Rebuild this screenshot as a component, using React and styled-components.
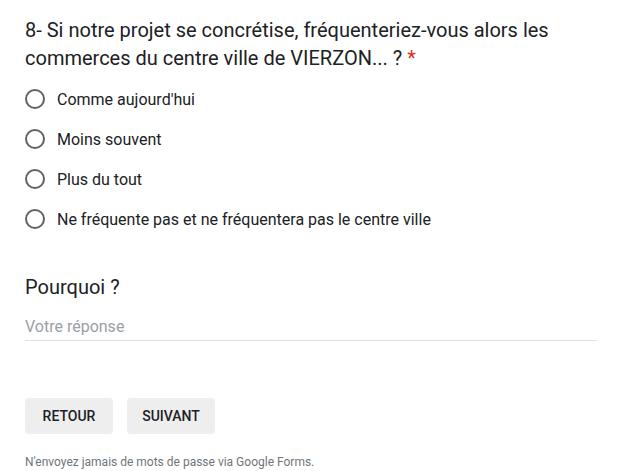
import React from "react";
import styled, { createGlobalStyle } from "styled-components";

const Global = createGlobalStyle`
  html, body { margin: 0; padding: 0; background: #fff; }
  body { font-family: Roboto, Arial, sans-serif; color: #202124; }
`;

const Page = styled.div`
  width: 572px;
  padding: 16px 0 0 25px;
  display: flex;
  flex-direction: column;
`;

const Title = styled.div`
  font-size: 20px;
  line-height: 28px;
  font-weight: 400;
  color: #202124;
`;

const Star = styled.span`
  color: #d93025;
  margin-left: 5px;
`;

const Options = styled.div`
  display: flex;
  flex-direction: column;
  gap: 20px;
  margin-top: 17px;
`;

const Option = styled.label`
  display: flex;
  align-items: center;
  height: 20px;
  gap: 12px;
  font-size: 16px;
  color: #202124;
`;

const Radio = styled.span`
  width: 20px;
  height: 20px;
  box-sizing: border-box;
  border: 2px solid #5f6368;
  border-radius: 50%;
  flex: none;
`;

const Question = styled.div`
  font-size: 20px;
  line-height: 24px;
  margin-top: 46px;
  color: #202124;
`;

const Answer = styled.div`
  margin-top: 18px;
  font-size: 16px;
  line-height: 20px;
  color: #9aa0a6;
  padding-bottom: 3px;
  border-bottom: 1px solid #e0e0e0;
`;

const Buttons = styled.div`
  display: flex;
  gap: 14px;
  margin-top: 57px;
`;

const Button = styled.button`
  height: 36px;
  min-width: 88px;
  padding: 0 8px;
  border: none;
  border-radius: 4px;
  background: #eeeeee;
  font-family: Roboto, Arial, sans-serif;
  font-size: 14px;
  font-weight: 500;
  color: #202124;
  text-transform: uppercase;
`;

const Footer = styled.div`
  margin-top: 20px;
  font-size: 12px;
  line-height: 16px;
  color: #70757a;
`;

const options = [
  "Comme aujourd'hui",
  "Moins souvent",
  "Plus du tout",
  "Ne fréquente pas et ne fréquentera pas le centre ville",
];

export default function App() {
  return (
    <>
      <Global />
      <Page>
        <Title>
          8- Si notre projet se concrétise, fréquenteriez-vous alors les commerces du centre ville de VIERZON... ?<Star>*</Star>
        </Title>
        <Options>
          {options.map(o => (
            <Option key={o}>
              <Radio />
              {o}
            </Option>
          ))}
        </Options>
        <Question>Pourquoi ?</Question>
        <Answer>Votre réponse</Answer>
        <Buttons>
          <Button>Retour</Button>
          <Button>Suivant</Button>
        </Buttons>
        <Footer>N'envoyez jamais de mots de passe via Google Forms.</Footer>
      </Page>
    </>
  );
}
